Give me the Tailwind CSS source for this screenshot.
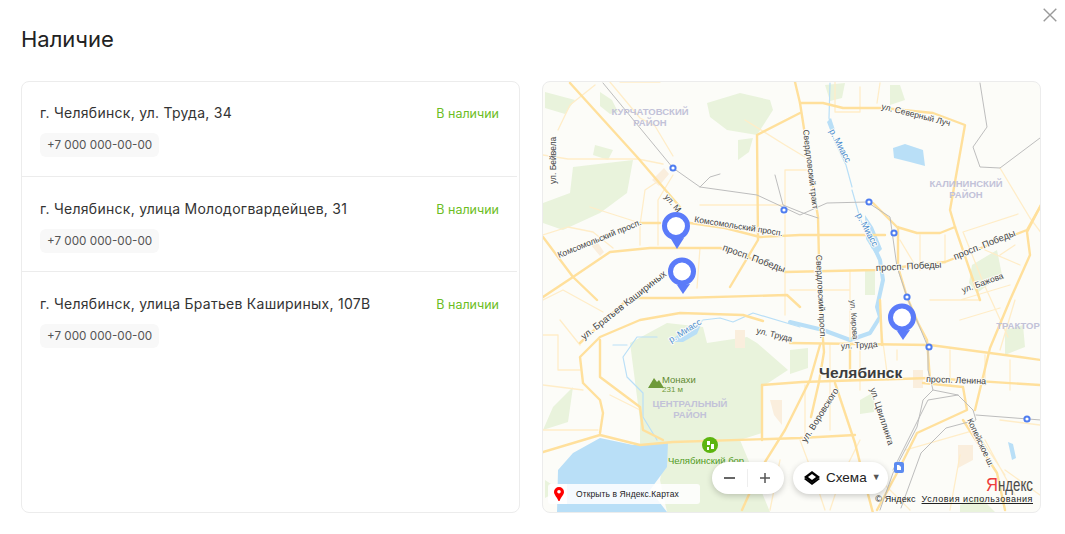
<!DOCTYPE html>
<html lang="ru">
<head>
  <meta charset="UTF-8" />
  <meta name="viewport" content="width=device-width, initial-scale=1" />
  <title>Наличие</title>
  <script src="https://cdn.jsdelivr.net/npm/@tailwindcss/browser@4"></script>
</head>
<body class="bg-white font-['Inter','Noto_Sans',sans-serif] text-[#2b2b2b]">
  <div class="relative h-[534px] w-[1065px] overflow-hidden px-[21px]">
    <!-- Close -->
    <button class="absolute right-[8px] top-[8px] text-[#9a9a9a]">
      <svg class="h-[14px] w-[14px]" viewBox="0 0 14 14" fill="none" stroke="currentColor" stroke-width="1.4"><path d="M.7.7l12.6 12.6M13.3.7L.7 13.3"/></svg>
    </button>

    <h1 class="pt-[25px] text-[22px] leading-[28px] text-[#222]">Наличие</h1>

    <div class="mt-[28px] flex gap-[22px]">
      <!-- Store list -->
      <div class="h-[432px] w-[499px] rounded-[8px] border border-[#ececec]">
        <div class="border-b border-[#ececec] mr-[2px] h-[95px] pl-[18px] pr-[18px] pt-[21px]">
          <div class="flex items-center justify-between">
            <span class="text-[14px] leading-[20px] tracking-[0.27px] text-[#333]">г. Челябинск, ул. Труда, 34</span>
            <span class="translate-y-[1px] text-[12.5px] leading-[20px] text-[#6cbd1e]">В наличии</span>
          </div>
          <div class="mt-[10px] inline-block rounded-[6px] bg-[#f8f8f8] px-[7px] py-[4px] text-[11.7px] leading-[16px] text-[#555]">+7 000 000-00-00</div>
        </div>
        <div class="border-b border-[#ececec] mr-[2px] h-[95px] pl-[18px] pr-[18px] pt-[22px]">
          <div class="flex items-center justify-between">
            <span class="text-[14px] leading-[20px] tracking-[0.27px] text-[#333]">г. Челябинск, улица Молодогвардейцев, 31</span>
            <span class="translate-y-[1px] text-[12.5px] leading-[20px] text-[#6cbd1e]">В наличии</span>
          </div>
          <div class="mt-[10px] inline-block rounded-[6px] bg-[#f8f8f8] px-[7px] py-[4px] text-[11.7px] leading-[16px] text-[#555]">+7 000 000-00-00</div>
        </div>
        <div class="h-[95px] pl-[18px] pr-[20px] pt-[22px]">
          <div class="flex items-center justify-between">
            <span class="text-[14px] leading-[20px] tracking-[0.27px] text-[#333]">г. Челябинск, улица Братьев Кашириных, 107В</span>
            <span class="translate-y-[1px] text-[12.5px] leading-[20px] text-[#6cbd1e]">В наличии</span>
          </div>
          <div class="mt-[10px] inline-block rounded-[6px] bg-[#f8f8f8] px-[7px] py-[4px] text-[11.7px] leading-[16px] text-[#555]">+7 000 000-00-00</div>
        </div>
      </div>

      <!-- Map -->
      <div class="relative h-[432px] w-[499px] overflow-hidden rounded-[8px] border border-[#ececec] bg-[#fcfcf8] font-['Liberation_Sans',sans-serif]">
        <svg class="absolute inset-0 h-full w-full" viewBox="543 82 497 430" fill="none" stroke-linejoin="round" stroke-linecap="round">
          <!-- Green areas -->
          <g fill="#e9f3dc">
            <path d="M630 343l37-20 36 4 4 16 40-6 10 6 31 27-26 17v46l-22 7 30 72H667l-7-32 8-37-28 2v-25z"/>
            <path d="M543 203l27-10 3-26 34-4 26-3-6 33-27 20-37 17-20-7z"/>
            <path d="M707 103l33-10 30 7 3 10-16 25-30-5-17-13zM738 140l15-2-4 14-11 8zM600 92l12 8 6 12-8 2-10-8zM545 92l30 8-10 14-20-6zM595 145l18 5-5 10-15-5zM890 85l10 0 5 15-15 5zM825 85l20-2-3 15-12 3z"/>
            <path d="M972 265l25-15 5 25-25 18-8-10zM1005 330l18-5 2 22-20 8zM865 270l10 0 0 25-10 0zM860 400l14-8 0 20-14 2zM543 430l25-8 5-35-20 20zM545 480l15 10-15 8z"/>
            <path d="M960 505l20-8 15 15h-35z"/>
            <path d="M790 350l18-2 0 20-18 6z"/>
          </g>
          <path fill="#faeedd" d="M652 180l12-12 5 6-10 12zM596 240l8 12-4 4-10-12zM735 330h10v18h-10zM770 400h12v25l-8-10zM913 370h10v18h-10zM958 445h15v15l-15 8z"/>
          <!-- Water -->
          <g fill="#b9dff7">
            <path d="M558 470l15-17 27-15 33 7 35-2-1 24-17 23 17 22H557z"/>
            <path d="M893 148l12-4 18 6 2 16-15-4-16-4zM827 122l4-4 4 12-3 5zM669 342l20-16 14-6-6 14-14 8zM865 215l8 12 9 22-6 6-10-16zM1008 442l5 2 3 14-4 2z"/>
          </g>
          <g stroke="#b9dff7">
            <path stroke-width="1.2" d="M830 83l-1 35 5 22 12 25 6 22M852 190l8 28 12 30M657 337h-20l-14 20 4 20 16 16v24l14 23M627 345h-14M703 320l17-2 13 4 20-9 47 14"/>
            <path stroke-width="4" d="M790 322l33 8 27 10 20-7 10-16-3-10 6-27-3-20-10-22"/>
          </g>
          <!-- Minor roads -->
          <g stroke="#ffedc8" stroke-width="1.3">
            <path d="M558 130l12-25 25-20M543 155l25 4 70 0 25 5M610 82l30 36 15 8 18 30M620 82h40M745 120l40 25 25 15M658 245V200l15-25M640 245v-20l5-35 12-8M590 207l50 16M543 235l25-8 25 5 20 16M543 300l20-10 40 22"/>
            <path d="M700 248l-3 40M700 205h85M785 210v-40h25M785 215v100M835 82v30h25l0-25M880 83l-3 20"/>
            <path d="M543 335h15l0 35h22M560 320l20 25M543 385l40 5M543 430h55M610 395l30 15M762 385v55M805 385v55M830 345v85M860 345v45M880 320l8 60M897 350v10M950 350v35M985 355v30M1010 360v30"/>
            <path d="M963 232l20 50 25 55M985 250l35 15M1000 168l30 50 15 20M963 232l55-18M1015 245l-15 10M960 300l50-15M960 320l40-12M1015 300l-15 50M920 235v35M945 235v28M850 270v70M790 290h60M930 300l50 0M900 240l15 25"/>
            <path d="M800 440l15 40 10 30M860 440l-20 40-10 30M905 450l70-20 30 45M960 455l-10 55M985 440l30 55M1000 420l40 5M1005 470l35 25M880 480l30 30M780 460l-10 50"/>
          </g>
          <!-- Main roads -->
          <g stroke="#ffe09c" stroke-width="2.4">
            <path d="M543 297l30-20 37-25 40-4h70l30 10 35 14 90-2 70-8 82-32 14-25"/>
            <path d="M640 223h20M690 223l35 5 35 9 40-2M800 235h85"/>
            <path d="M570 83l68 75 42 49"/>
            <path d="M543 237l30 40 24 23"/>
            <path d="M795 82l5 21 10 64 8 50 2 85 4 50-5 30-8 35"/>
            <path d="M800 103h23l20 5h40l50 5 32 12-15 85 5 17 25 73"/>
            <path d="M955 227l-15 6h-23l-20-6-24-24M898 227v40l9 30 11 26 9 17 3 40"/>
            <path d="M800 113l-43 22 1 105-28 47"/>
            <path d="M580 343l47-43M630 298h50l107-3 13 12"/>
            <path d="M600 433l3-20-3-13-17-17-3-26 20-20 40-17 40-7 63 2 20 6"/>
            <path d="M600 340v37l40 30 3 23 20 10"/>
            <path d="M790 343l140 2 90 12 21 3M762 385l40-3 128-4 110 7"/>
            <path d="M543 452l57-17 40 10 33-3 127-4 55-3"/>
            <path d="M762 385v55"/>
            <path d="M1041 205l-14 27 3 23-20 45-20 48-15 62"/>
            <path d="M820 345l-10 35-25 50-25 40-18 40M835 383l20 60 10 40 8 30M880 300l2 45M850 345v35"/>
            <path d="M923 383l40 4 4 23-50 23-20 40-20 37M963 420l34 53 8 37"/>
          </g>
          <!-- Railways -->
          <g stroke="#bdbdbd" stroke-width="1">
            <path d="M603 83l70 85 27 19 57 8 43 20 27-12 40-1 23 15 7 50 10 30 21 50v23l5 20-10 10-6 27-24 46-13 37"/>
            <path d="M933 390l25 5 15 15 3 10-30 8-25 25-20 55M980 83l7 44-14 20 7 20 20 1 40-30M976 415l65 5M958 395l-30 5-15 30-20 40"/>
            <path d="M700 187l10-10 10-3M775 175l8 30 20 8 15 5"/>
          </g>
          <!-- District and place labels -->
          <g font-size="9.5" font-weight="bold" fill="#c2c2d8" text-anchor="middle">
            <text x="650" y="115">КУРЧАТОВСКИЙ</text><text x="650" y="126">РАЙОН</text>
            <text x="966" y="187">КАЛИНИНСКИЙ</text><text x="966" y="198">РАЙОН</text>
            <text x="690" y="407">ЦЕНТРАЛЬНЫЙ</text><text x="690" y="418">РАЙОН</text>
            <text x="1018" y="329">ТРАКТОР</text>
          </g>
          <!-- Street labels -->
          <g font-size="8.5" fill="#444" stroke="#fcfcf8" stroke-width="2" paint-order="stroke" stroke-linecap="butt">
            <text transform="translate(556 184) rotate(-90)">ул. Бейвела</text>
            <text transform="translate(559 258) rotate(-22)">Комсомольский просп.</text>
            <text transform="translate(694 222) rotate(9)">Комсомольский просп.</text>
            <text transform="translate(722 250) rotate(20)" font-size="9.5">просп. Победы</text>
            <text transform="translate(664 197) rotate(50)">ул. М.</text>
            <text transform="translate(876 271) rotate(-3)" font-size="9.5">просп. Победы</text>
            <text transform="translate(955 260) rotate(-22)" font-size="9.5">просп. Победы</text>
            <text transform="translate(963 293) rotate(-20)">ул. Бажова</text>
            <text transform="translate(881 109) rotate(14)">ул. Северный Луч</text>
            <text transform="translate(803 130) rotate(83)">Свердловский тракт</text>
            <text transform="translate(816 255) rotate(87)">Свердловский просп.</text>
            <text transform="translate(850 300) rotate(86)" font-size="8">ул. Кирова</text>
            <text transform="translate(584 340) rotate(-38)" font-size="9.5">ул. Братьев Кашириных</text>
            <text transform="translate(756 333) rotate(14)">ул. Труда</text>
            <text transform="translate(841 349) rotate(-3)">ул. Труда</text>
            <text transform="translate(926 382) rotate(2)" font-size="9">просп. Ленина</text>
            <text transform="translate(806 443) rotate(-58)" font-size="9">ул. Воровского</text>
            <text transform="translate(870 389) rotate(72)" font-size="9">ул. Цвиллинга</text>
            <text transform="translate(967 420) rotate(65)">Копейское ш.</text>
          </g>
          <g font-size="9" fill="#4d8fd0" stroke="#fcfcf8" stroke-width="2" paint-order="stroke" stroke-linecap="butt">
            <text transform="translate(829 131) rotate(62)">р. Миасс</text>
            <text transform="translate(856 215) rotate(62)">р. Миасс</text>
            <text transform="translate(671 343) rotate(-32)">р. Миасс</text>
          </g>
          <!-- City label -->
          <text x="819" y="378" font-size="15.5" font-weight="bold" fill="#3c3c3c" stroke="#fcfcf8" stroke-width="2" paint-order="stroke">Челябинск</text>
          <!-- Monakhi -->
          <path d="M648 388l6-10 3 4 2-2 5 8z" fill="#6f9a3a"/>
          <text x="662" y="383" font-size="9.5" fill="#5f8a30">Монахи</text>
          <text x="662" y="392" font-size="8" fill="#6f9a3a">231 м</text>
          <!-- Bor -->
          <circle cx="710" cy="445" r="8" fill="#5cb50f"/>
          <path d="M707 441h3v4h-3zM711 444h3v5h-3zM707 447h2v3h-2z" fill="#fff"/>
          <text x="668" y="464" font-size="9.5" fill="#4f9a1c">Челябинский бор</text>
          <!-- Metro stops -->
          <g fill="#fff" stroke="#4f7df0" stroke-width="2">
            <circle cx="673" cy="168" r="2.6"/><circle cx="784" cy="210" r="2.6"/><circle cx="869" cy="202" r="2.6"/>
            <circle cx="894" cy="233" r="2.6"/><circle cx="907" cy="297" r="2.6"/><circle cx="929" cy="347" r="2.6"/>
            <circle cx="1027" cy="419" r="2.6"/>
          </g>
          <rect x="894" y="462" width="10" height="11" rx="2" fill="#5c8bf0"/>
          <path d="M897 465h2l2 2v3h-4z" fill="#fff"/>
          <!-- Pins -->
          <g fill="#fff" stroke="#5b7bf9" stroke-width="5">
            <path d="M676 214.5a11.500 11.500 0 1 1 0 23a11.500 11.500 0 1 1 0-23z"/>
            <path d="M682 260a11.500 11.500 0 1 1 0 23a11.500 11.500 0 1 1 0-23z"/>
            <path d="M902 306a11.500 11.500 0 1 1 0 23a11.500 11.500 0 1 1 0-23z"/>
          </g>
          <g fill="#5b7bf9">
            <path d="M671 239l13-1-7 11z"/>
            <path d="M677 285l13-1-7 10z"/>
            <path d="M897 331l13-1-7 10z"/>
          </g>
          <!-- Yandex logo -->
          <text x="986" y="491" font-size="18" fill="#ee3d3d" textLength="12" lengthAdjust="spacingAndGlyphs">Я</text>
          <text x="998" y="491" font-size="18" fill="#4a4a4a" textLength="35" lengthAdjust="spacingAndGlyphs">ндекс</text>
        </svg>

        <!-- Open in Yandex Maps -->
        <div class="absolute bottom-[8px] left-[5px] flex h-[20px] w-[152px] items-center rounded-[3px] bg-white/85 pl-[2px] text-[8.5px] tracking-[0.1px] text-[#222]">
          <span class="mr-[9px] flex h-[20px] w-[17px] shrink-0 items-center justify-center bg-white">
            <svg class="h-[14px] w-[10px]" viewBox="0 0 10 14"><path fill="#f00" d="M5 0a5 5 0 0 1 5 5c0 2.500-3 5-4.400 9H4.400C4 11.500 0 8 0 5a5 5 0 0 1 5-5z"/><circle cx="5" cy="4.800" r="1.800" fill="#fff"/></svg>
          </span>
          <span>Открыть в Яндекс.Картах</span>
        </div>

        <!-- Zoom control -->
        <div class="absolute left-[169px] top-[380px] flex h-[32px] w-[72px] items-center rounded-full bg-white shadow-[0_2px_6px_rgba(0,0,0,0.2)]">
          <span class="flex h-[18px] w-[36px] items-center justify-center border-r border-[#eee]"><span class="h-[1.500px] w-[11px] bg-[#666]"></span></span>
          <svg class="ml-[11px] h-[12px] w-[12px]" viewBox="0 0 12 12" stroke="#555" stroke-width="1.500"><path d="M1 6h10M6 1v10"/></svg>
        </div>

        <!-- Layers control -->
        <div class="absolute left-[250px] top-[380px] flex h-[32px] w-[95px] items-center rounded-full bg-white pl-[11px] text-[13.500px] text-[#222] shadow-[0_2px_6px_rgba(0,0,0,0.2)]">
          <svg class="mr-[6px] h-[14px] w-[16px] shrink-0" viewBox="0 0 16 14"><path d="M8 0l8 6-8 6-8-6z" fill="#000"/><path d="M0 8l8 6 8-6-1.500-1L8 11.500 1.500 7z" fill="#000"/><path d="M8 3l4 3-4 3-4-3z" fill="#fff"/></svg>
          <span>Схема</span>
          <span class="ml-[5px] text-[9px] text-[#555]">▼</span>
        </div>

        <!-- Copyright -->
        <div class="absolute bottom-[7px] right-[7px] flex gap-[6px] text-[9px] leading-[11px] tracking-[0.55px] text-[#222]">
          <span class="tracking-[0.1px]">© Яндекс</span>
          <span class="underline">Условия использования</span>
        </div>
      </div>
    </div>
  </div>
</body>
</html>
